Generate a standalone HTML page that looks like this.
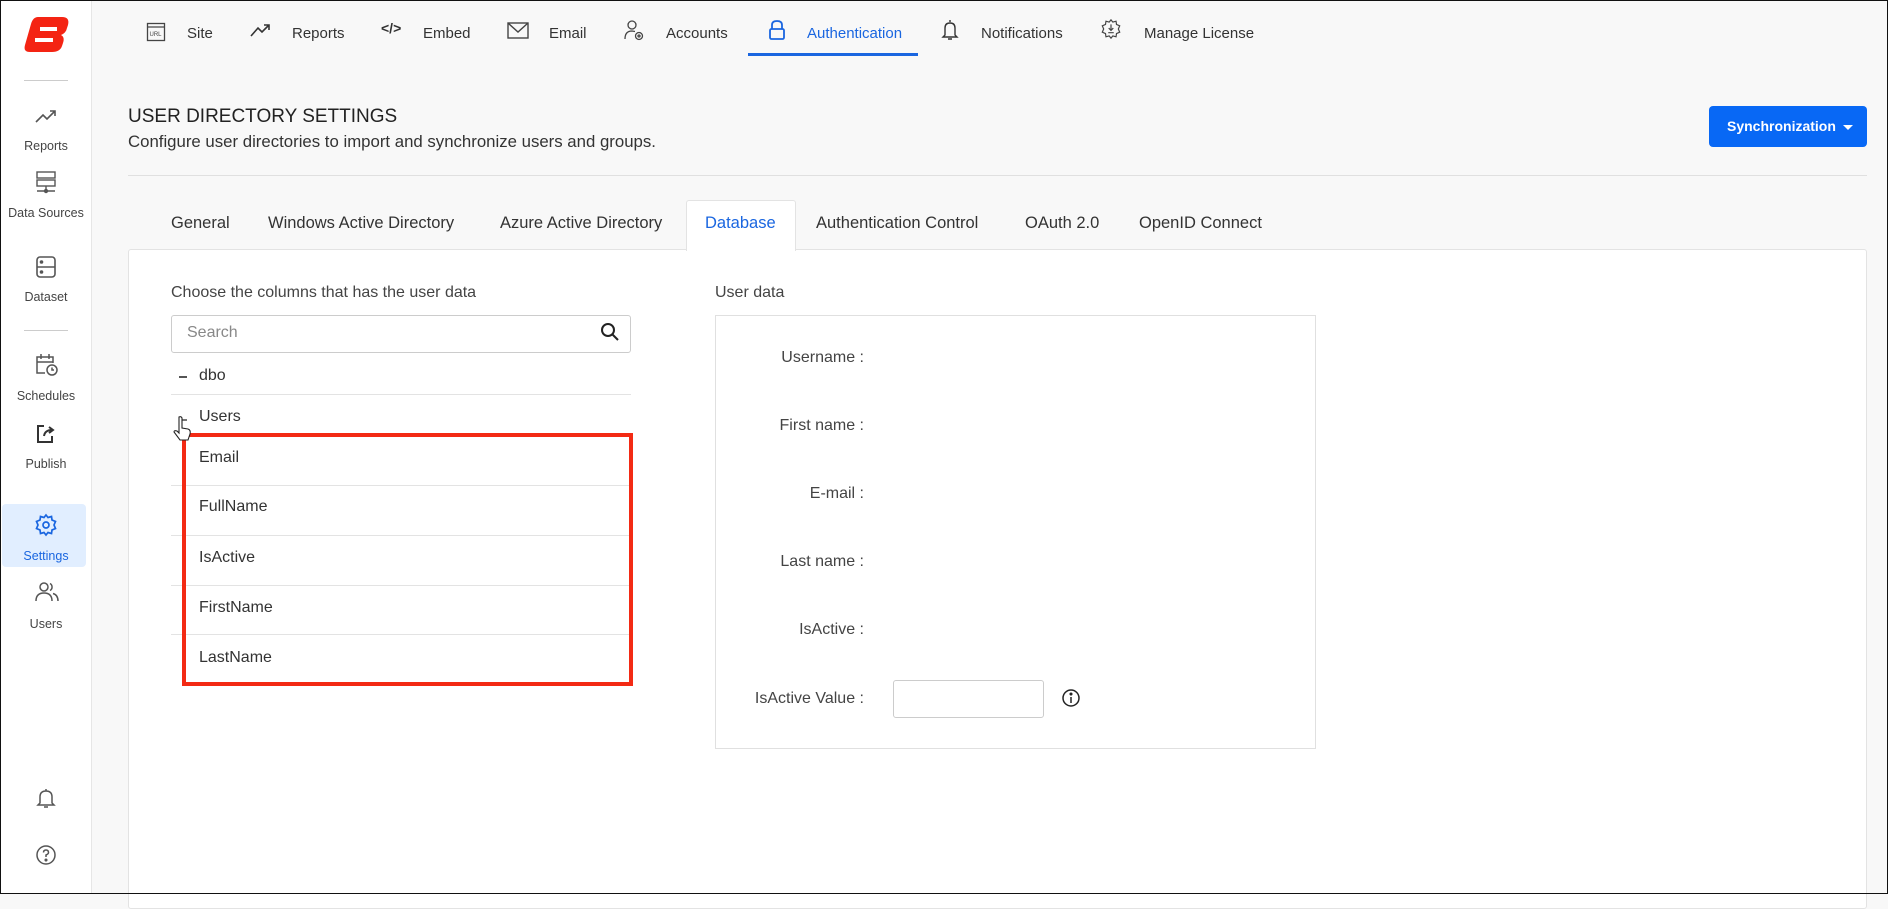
<!DOCTYPE html>
<html><head><meta charset="utf-8"><style>
*{margin:0;padding:0;box-sizing:border-box}
body{width:1888px;height:894px;overflow:hidden;background:#f8f8f8;font-family:"Liberation Sans",sans-serif;color:#333;position:relative}
.a{position:absolute;white-space:nowrap}
#frame{position:absolute;left:0;top:0;width:1888px;height:894px;border:1px solid #111;pointer-events:none;z-index:9}
#side{position:absolute;left:0;top:0;width:92px;height:894px;background:#fff;border-right:1px solid #e6e6e6}
.sl{position:absolute;width:92px;text-align:center;font-size:12.5px;color:#444}
.si{position:absolute;left:34px}
.nav{font-size:15px;color:#333;top:25px}
.tab{font-size:16.5px;color:#333;top:214px}
.lbl{font-size:16px;color:#444;text-align:right;width:200px;left:664px}
.row{position:absolute;left:171px;width:460px;height:1px;background:#e3e3e3}
.it{font-size:16px;color:#333;left:199px}
</style></head><body>
<div id="side">
<svg class="a" style="left:22px;top:14px" width="48" height="40" viewBox="0 0 48 40"><path d="M16 3 H40 Q48 3 46 11 L45 14 Q44 19 39 21 Q43 23 41 29 L40 32 Q38 38 30 38 H8 Q1 38 3 31 L9 10 Q11 3 16 3Z" fill="#f42413"/><rect x="18" y="13" width="17" height="4" fill="#fff"/><rect x="13" y="24" width="18" height="4" fill="#fff"/></svg>
<div class="a" style="left:24px;top:80px;width:44px;height:1px;background:#ccc"></div>
<svg class="si" style="top:106px" width="24" height="20" viewBox="0 0 24 20" fill="none" stroke="#555" stroke-width="1.6"><path d="M2 16 L9 9 L13 13 L21 5 M16 5 H21 V10"/></svg>
<div class="sl" style="top:139px">Reports</div>
<svg class="si" style="top:170px" width="24" height="24" viewBox="0 0 24 24" fill="none" stroke="#555" stroke-width="1.4"><rect x="3" y="2" width="18" height="6"/><rect x="3" y="10" width="18" height="6"/><path d="M12 16 V21 M3 21 H21"/><circle cx="12" cy="21" r="1.5" fill="#555"/></svg>
<div class="sl" style="top:206px">Data Sources</div>
<svg class="si" style="top:255px" width="24" height="24" viewBox="0 0 24 24" fill="none" stroke="#555" stroke-width="1.6"><rect x="3" y="2" width="18" height="20" rx="3"/><path d="M3 12 H21"/><circle cx="7.5" cy="7" r="1" fill="#555"/><circle cx="7.5" cy="17" r="1" fill="#555"/></svg>
<div class="sl" style="top:290px">Dataset</div>
<div class="a" style="left:24px;top:330px;width:44px;height:1px;background:#ccc"></div>
<svg class="si" style="top:352px" width="26" height="26" viewBox="0 0 26 26" fill="none" stroke="#555" stroke-width="1.5"><path d="M11 21 H3 V5 H19 V11 M3 10 H19 M7 2 V7 M15 2 V7"/><circle cx="18" cy="18" r="5"/><path d="M18 15.5 V18 H20"/></svg>
<div class="sl" style="top:389px">Schedules</div>
<svg class="si" style="top:422px" width="24" height="24" viewBox="0 0 24 24" fill="none" stroke="#333" stroke-width="2"><path d="M10 4 H4 V20 H18 V14"/><path d="M10 14 Q11 8 18 8 M15 5 L19 8 L15 11"/></svg>
<div class="sl" style="top:457px">Publish</div>
<div class="a" style="left:2px;top:504px;width:84px;height:63px;background:#e1eeff;border-radius:4px"></div>
<svg class="si" style="top:513px" width="24" height="24" viewBox="0 0 24 24" fill="none" stroke="#1a66e0" stroke-width="1.7"><circle cx="12" cy="12" r="3"/><path d="M12 2 L14 4.5 L17.5 3.5 L18 7 L21.5 8.5 L20 12 L21.5 15.5 L18 17 L17.5 20.5 L14 19.5 L12 22 L10 19.5 L6.5 20.5 L6 17 L2.5 15.5 L4 12 L2.5 8.5 L6 7 L6.5 3.5 L10 4.5Z"/></svg>
<div class="sl" style="top:549px;color:#1a66e0">Settings</div>
<svg class="si" style="top:580px" width="26" height="24" viewBox="0 0 26 24" fill="none" stroke="#555" stroke-width="1.5"><circle cx="10" cy="7" r="4"/><path d="M2 21 Q2 13 10 13 Q18 13 18 21"/><path d="M16 3.5 A4 4 0 0 1 16 10.5 M19 13.5 Q24 15 24 21"/></svg>
<div class="sl" style="top:617px">Users</div>
<svg class="si" style="top:786px" width="24" height="24" viewBox="0 0 24 24" fill="none" stroke="#555" stroke-width="1.5"><path d="M6 17 V11 Q6 5 12 5 Q18 5 18 11 V17 L20 19 H4Z M10 21 H14 M12 3 V5"/></svg>
<svg class="si" style="top:843px" width="24" height="24" viewBox="0 0 24 24" fill="none" stroke="#555" stroke-width="1.5"><circle cx="12" cy="12" r="9"/><path d="M9.5 9.5 Q9.5 7 12 7 Q14.5 7 14.5 9.5 Q14.5 11 12 12 V14"/><circle cx="12" cy="17" r=".8" fill="#555"/></svg>
</div>

<svg class="a" style="left:146px;top:22px" width="20" height="20" viewBox="0 0 20 20" fill="none" stroke="#444" stroke-width="1.3"><rect x="1.5" y="1.5" width="17" height="17"/><path d="M1.5 5 H18.5"/><text x="3.5" y="14" font-size="6" fill="#444" stroke="none" font-family="Liberation Sans">URL</text></svg>
<div class="a nav" style="left:187px">Site</div>
<svg class="a" style="left:250px;top:22px" width="22" height="16" viewBox="0 0 22 16" fill="none" stroke="#333" stroke-width="1.6"><path d="M1 14 L8 6 L12 10 L19 3 M14 3 H19 V8"/></svg>
<div class="a nav" style="left:292px">Reports</div>
<div class="a" style="left:381px;top:20px;font-size:14px;color:#333;font-weight:bold">&lt;/&gt;</div>
<div class="a nav" style="left:423px">Embed</div>
<svg class="a" style="left:507px;top:22px" width="22" height="17" viewBox="0 0 22 17" fill="none" stroke="#444" stroke-width="1.4"><rect x="1" y="1" width="20" height="15"/><path d="M1 1 L11 10 L21 1"/></svg>
<div class="a nav" style="left:549px">Email</div>
<svg class="a" style="left:624px;top:19px" width="22" height="24" viewBox="0 0 22 24" fill="none" stroke="#444" stroke-width="1.3"><circle cx="8" cy="6" r="4"/><path d="M1 20 Q1 12 8 12 L11 12.5"/><circle cx="15" cy="17" r="3.5"/><circle cx="15" cy="17" r="1"/></svg>
<div class="a nav" style="left:666px">Accounts</div>
<svg class="a" style="left:768px;top:19px" width="18" height="22" viewBox="0 0 18 22" fill="none" stroke="#1a66e0" stroke-width="1.8"><path d="M4 10 V6 Q4 2 9 2 Q14 2 14 6 V10"/><rect x="2" y="10" width="14" height="10" rx="1.5"/></svg>
<div class="a nav" style="left:807px;color:#1a66e0">Authentication</div>
<div class="a" style="left:748px;top:53px;width:170px;height:3px;background:#1a66e0"></div>
<svg class="a" style="left:941px;top:18px" width="18" height="24" viewBox="0 0 18 24" fill="none" stroke="#333" stroke-width="1.4"><path d="M9 2 V4 M4 17 V10 Q4 5 9 5 Q14 5 14 10 V17 L16 19 H2Z M7 21 H11"/></svg>
<div class="a nav" style="left:981px">Notifications</div>
<svg class="a" style="left:1100px;top:18px" width="22" height="22" viewBox="0 0 24 24" fill="none" stroke="#444" stroke-width="1.3"><path d="M12 2 L14 4.5 L17.5 3.5 L18 7 L21.5 8.5 L20 12 L21.5 15.5 L18 17 L17.5 20.5 L14 19.5 L12 22 L10 19.5 L6.5 20.5 L6 17 L2.5 15.5 L4 12 L2.5 8.5 L6 7 L6.5 3.5 L10 4.5Z"/><path d="M12 7 V13 M9.5 11 L12 13.5 L14.5 11 M9 16 H15"/></svg>
<div class="a nav" style="left:1144px">Manage License</div>

<div class="a" style="left:128px;top:106px;font-size:19px;color:#222">USER DIRECTORY SETTINGS</div>
<div class="a" style="left:128px;top:132px;font-size:16.8px;color:#333">Configure user directories to import and synchronize users and groups.</div>
<div class="a" style="left:1709px;top:106px;width:158px;height:41px;background:#0868f5;border-radius:4px;color:#fff;font-size:14px;font-weight:bold;line-height:41px;padding-left:18px">Synchronization <span style="display:inline-block;width:0;height:0;border-left:5px solid transparent;border-right:5px solid transparent;border-top:5px solid #fff;vertical-align:middle;margin-left:3px"></span></div>
<div class="a" style="left:128px;top:175px;width:1739px;height:1px;background:#e0e0e0"></div>

<div class="a" style="left:128px;top:249px;width:1739px;height:660px;background:#fff;border:1px solid #e3e3e3;border-radius:3px"></div>
<div class="a" style="left:686px;top:200px;width:110px;height:51px;background:#fff;border:1px solid #e3e3e3;border-bottom:none;border-radius:3px 3px 0 0"></div>
<div class="a tab" style="left:171px">General</div>
<div class="a tab" style="left:268px">Windows Active Directory</div>
<div class="a tab" style="left:500px">Azure Active Directory</div>
<div class="a tab" style="left:705px;color:#1a66e0">Database</div>
<div class="a tab" style="left:816px">Authentication Control</div>
<div class="a tab" style="left:1025px">OAuth 2.0</div>
<div class="a tab" style="left:1139px">OpenID Connect</div>

<div class="a" style="left:171px;top:284px;font-size:16px;color:#444">Choose the columns that has the user data</div>
<div class="a" style="left:171px;top:315px;width:460px;height:38px;border:1px solid #ccc;border-radius:3px;background:#fff"></div>
<div class="a" style="left:187px;top:324px;font-size:16px;color:#888">Search</div>
<svg class="a" style="left:600px;top:322px" width="20" height="20" viewBox="0 0 20 20" fill="none" stroke="#222" stroke-width="2"><circle cx="8" cy="8" r="6"/><path d="M12.5 12.5 L18 18"/></svg>
<div class="a" style="left:179px;top:376px;width:8px;height:2px;background:#555"></div>
<div class="a it" style="top:367px">dbo</div>
<div class="row" style="top:394px"></div>
<div class="a" style="left:179px;top:419px;width:8px;height:2px;background:#777"></div>
<div class="a it" style="top:408px">Users</div>
<div class="a it" style="top:449px">Email</div>
<div class="row" style="top:485px"></div>
<div class="a it" style="top:498px">FullName</div>
<div class="row" style="top:535px"></div>
<div class="a it" style="top:549px">IsActive</div>
<div class="row" style="top:585px"></div>
<div class="a it" style="top:599px">FirstName</div>
<div class="row" style="top:634px"></div>
<div class="a it" style="top:649px">LastName</div>
<div class="a" style="left:182px;top:433px;width:451px;height:253px;border:4px solid #f32a14"></div>
<svg class="a" style="left:171px;top:415px" width="26" height="30" viewBox="0 0 26 30" fill="#fff" stroke="#222" stroke-width="1.1"><path d="M8 2 Q10 1 11 3 V13 L17 14 Q20 15 19 19 L17 25 H9 L3 17 Q3 15 6 16 L8 18Z"/></svg>

<div class="a" style="left:715px;top:284px;font-size:16px;color:#444">User data</div>
<div class="a" style="left:715px;top:315px;width:601px;height:434px;border:1px solid #e0e0e0;background:#fff"></div>
<div class="a lbl" style="top:349px">Username :</div>
<div class="a lbl" style="top:417px">First name :</div>
<div class="a lbl" style="top:485px">E-mail :</div>
<div class="a lbl" style="top:553px">Last name :</div>
<div class="a lbl" style="top:621px">IsActive :</div>
<div class="a lbl" style="top:690px">IsActive Value :</div>
<div class="a" style="left:893px;top:680px;width:151px;height:38px;border:1px solid #ccc;border-radius:3px;background:#fff"></div>
<svg class="a" style="left:1061px;top:688px" width="20" height="20" viewBox="0 0 20 20" fill="none" stroke="#222" stroke-width="1.5"><circle cx="10" cy="10" r="8"/><path d="M10 9 V15"/><circle cx="10" cy="6" r=".8" fill="#222"/></svg>
<div id="frame"></div>
</body></html>
